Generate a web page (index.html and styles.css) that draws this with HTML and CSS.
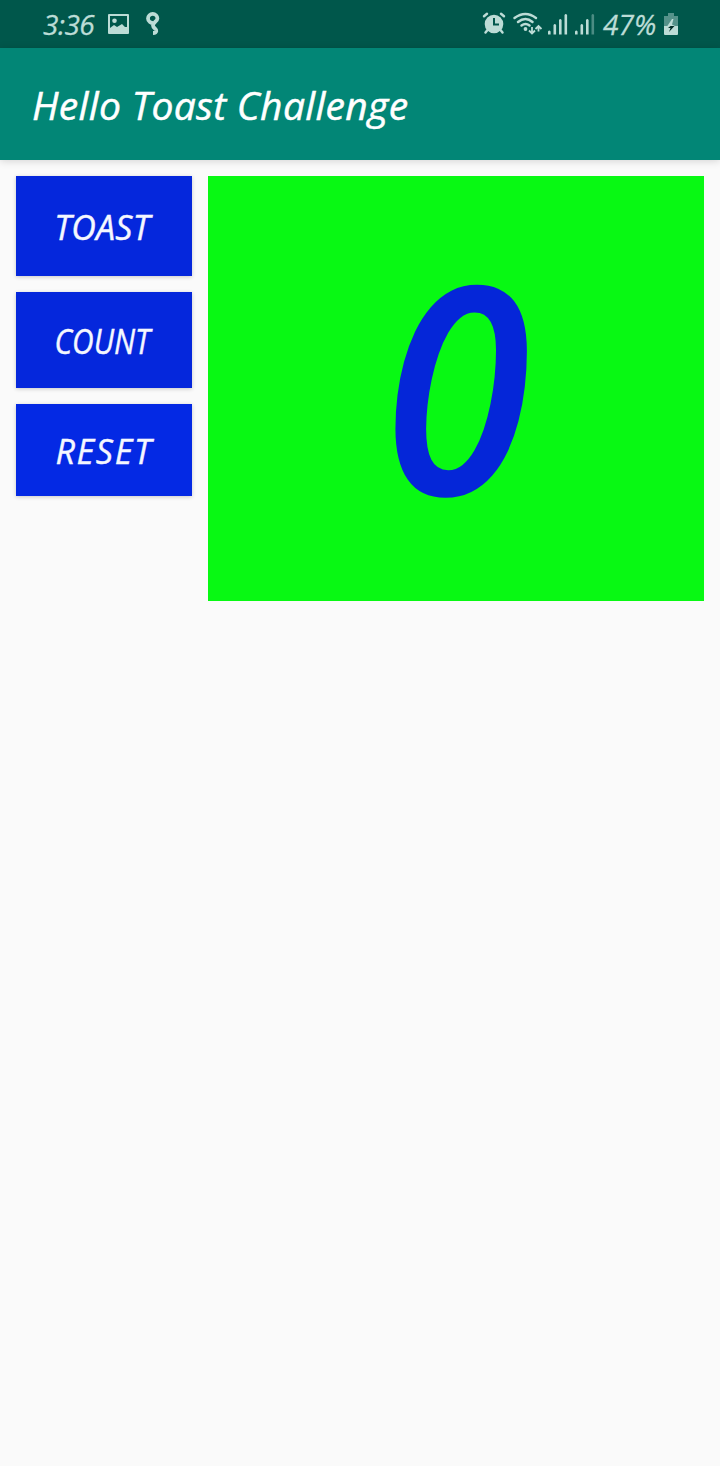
FILE: index.html
```html
<!DOCTYPE html>
<html lang="en">
<head>
<meta charset="utf-8">
<title>Hello Toast Challenge</title>
<link rel="stylesheet" href="styles.css">
</head>
<body>
<div class="status-bar">
  <span class="clock">3:36</span>
  <svg class="picture" width="21" height="20" viewBox="0 0 21 20"><path fill-rule="evenodd" d="M1 0H20Q21 0 21 1V19Q21 20 20 20H1Q0 20 0 19V1Q0 0 1 0ZM2 2V14L6 11L9 13L14 10L17 13L19 13V2Z"/><circle cx="6.5" cy="6.7" r="2.3"/></svg>
  <svg class="nine" width="14" height="23" viewBox="0 0 14 23"><path fill="none" stroke="currentColor" stroke-width="3.8" d="M8 11.200C5 11.500 2 9.500 2 6.500A4.700 4.600 0 0 1 11.400 6.500C11.400 9 7 10.500 7 13.500C7 16 10.500 16.500 10.300 19Q10 21 7 21"/></svg>
  <span class="spacer"></span>
  <svg class="alarm" width="24" height="23" viewBox="0 0 24 23"><circle cx="12" cy="12" r="9.300"/><path class="line" d="M2 4.200L5 1.800M19 1.800L22 4.200M5.500 18L3.500 20.500M18.500 18L20.500 20.500"/><path class="cutout" d="M12 6V12.500H17"/></svg>
  <svg class="wifi" width="28" height="23" viewBox="0 0 28 23"><path class="line" d="M1.500 5Q12.500 -3 23 5M5 9Q12.500 3 19.500 9M8.500 12.500Q12.500 9.500 16.500 12.500"/><circle cx="12.500" cy="16" r="1.900"/><path class="arrow" d="M19 14V20.500M16 17.500L19 20.500L22 17.500M25.500 18.500V13M22.500 16L25.500 13L28.500 16"/></svg>
  <svg class="signal" width="20" height="21" viewBox="0 0 20 21"><path d="M0 17.500Q1.300 15.500 2.600 17.500V20.500H0ZM5.500 11Q6.800 9 8.100 11V20.500H5.500ZM11 6Q12.300 4 13.600 6V20.500H11ZM16.500 1Q17.800 -1 19.100 1V20.500H16.500Z"/></svg>
  <svg class="signal second" width="20" height="21" viewBox="0 0 20 21"><path d="M0 17.500Q1.300 15.500 2.600 17.500V20.500H0ZM5.500 11Q6.800 9 8.100 11V20.500H5.500ZM11 6Q12.300 4 13.600 6V20.500H11Z"/><path opacity=".4" d="M16.500 1Q17.800 -1 19.100 1V20.500H16.500Z"/></svg>
  <span class="percent">47%</span>
  <svg class="battery" width="14" height="22" viewBox="0 0 14 22"><path opacity=".45" d="M4 0H10V3H14V13H0V3H4Z"/><path d="M0 13H14V21Q14 22 13 22H1Q0 22 0 21Z"/><path d="M8 6L3 13.500H7L11 13L8 11.500L9.500 6Z"/><path fill="#002c26" d="M6.500 13H10.500L5 19L6.500 15H4Z"/></svg>
</div>
<header class="app-bar"><h1 class="title">Hello Toast Challenge</h1></header>
<main class="content">
  <div class="buttons">
    <button class="button toast"><span class="label">TOAST</span></button>
    <button class="button count"><span class="label">COUNT</span></button>
    <button class="button reset"><span class="label">RESET</span></button>
  </div>
  <div class="counter"><span class="value">0</span></div>
</main>
</body>
</html>
```

FILE: styles.css
```css
* { box-sizing: border-box; }
body {
  margin: 0;
  min-height: 1466px;
  background: #fafafa;
  font-family: "Open Sans", "Noto Sans", sans-serif;
  font-style: italic;
}
.status-bar {
  display: flex;
  align-items: flex-start;
  height: 48px;
  padding: 0 42px 0 43px;
  background: #00574b;
  color: #bcdcd6;
}
.status-bar svg { flex: none; fill: currentColor; overflow: visible; }
.clock, .percent { font-size: 28px; line-height: 48px; white-space: nowrap; -webkit-text-stroke: .3px currentColor; }
.clock { width: 65px; letter-spacing: -.5px; }
.percent { width: 61px; letter-spacing: .1px; }
.picture { margin-top: 14px; }
.nine { margin: 12px 0 0 17px; }
.spacer { flex: 1; }
.alarm { margin: 12px 7px 0 0; }
.wifi { margin: 13px 7px 0 0; }
.signal { margin: 14px 7px 0 0; }
.second { margin-right: 8px; }
.battery { margin-top: 13px; }
.line { fill: none; stroke: currentColor; stroke-width: 2.500px; stroke-linecap: round; }
.arrow { fill: none; stroke: currentColor; stroke-width: 1.800px; }
.cutout { fill: none; stroke: #00574b; stroke-width: 2px; }
.app-bar {
  position: relative;
  display: flex;
  align-items: center;
  height: 112px;
  padding-left: 32px;
  background: #028676;
  box-shadow: 0 1px 8px rgba(0, 0, 0, .16);
}
.title {
  margin: 0;
  padding-top: 2px;
  color: #fff;
  font-size: 39px;
  font-weight: 500;
  letter-spacing: .32px;
  line-height: 56px;
  white-space: nowrap;
  -webkit-text-stroke: .5px currentColor;
}
.content { display: flex; gap: 16px; padding: 16px; align-items: flex-start; }
.buttons { display: flex; flex-direction: column; gap: 16px; width: 176px; }
.button {
  display: flex;
  align-items: center;
  justify-content: center;
  padding: 2px 0 0;
  border: 0;
  background: #0527dc;
  box-shadow: 0 1px 4px rgba(0, 0, 0, .2);
  color: #f5f7ff;
  font: italic 500 34px/44px "Open Sans", "Noto Sans", sans-serif;
}
.label { -webkit-text-stroke: .4px currentColor; }
.toast { height: 100px; padding-right: 4px; }
.toast .label { letter-spacing: .2px; }
.count { height: 96px; padding-right: 4px; }
.count .label { transform: scaleX(.88); }
.reset { height: 92px; background: #0429e4; }
.reset .label { letter-spacing: 1.700px; }
.counter {
  display: flex;
  align-items: center;
  justify-content: center;
  width: 496px;
  height: 425px;
  background: #08f913;
}
.value {
  color: #0526d8;
  font-size: 290px;
  font-weight: 600;
  line-height: 425px;
  transform: translate(1px, -6px) scaleX(.92);
}
```
